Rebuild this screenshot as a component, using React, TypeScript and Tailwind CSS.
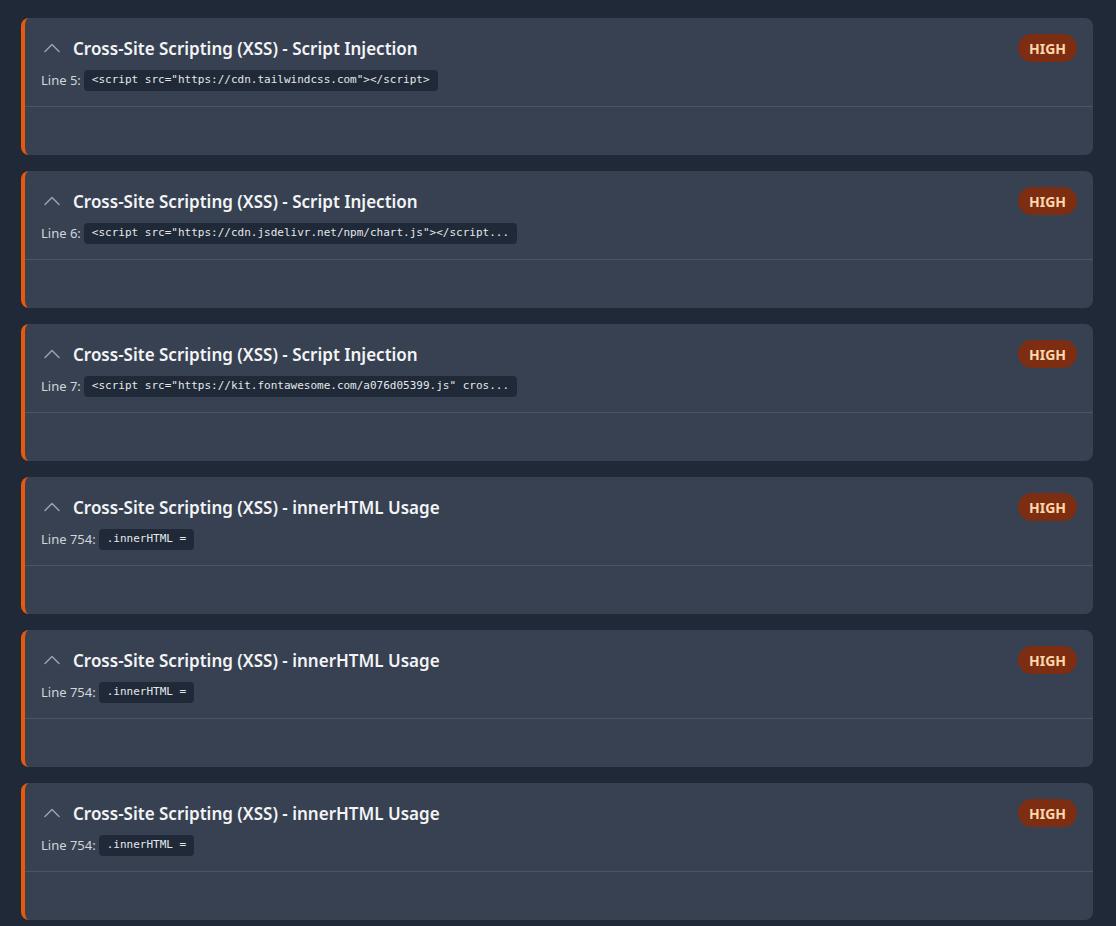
import React from "react";

type Finding = {
  title: string;
  line: number;
  code: string;
};

const FINDINGS: Finding[] = [
  { title: "Cross-Site Scripting (XSS) - Script Injection", line: 5, code: '<script src="https://cdn.tailwindcss.com"></script>' },
  { title: "Cross-Site Scripting (XSS) - Script Injection", line: 6, code: '<script src="https://cdn.jsdelivr.net/npm/chart.js"></script...' },
  { title: "Cross-Site Scripting (XSS) - Script Injection", line: 7, code: '<script src="https://kit.fontawesome.com/a076d05399.js" cros...' },
  { title: "Cross-Site Scripting (XSS) - innerHTML Usage", line: 754, code: ".innerHTML =" },
  { title: "Cross-Site Scripting (XSS) - innerHTML Usage", line: 754, code: ".innerHTML =" },
  { title: "Cross-Site Scripting (XSS) - innerHTML Usage", line: 754, code: ".innerHTML =" },
];

function Chevron() {
  return (
    <svg width="16" height="10" viewBox="0 0 16 10" fill="none" className="text-gray-400">
      <polyline points="1,8.5 8,1.5 15,8.5" stroke="currentColor" strokeWidth="1.5" strokeLinecap="round" strokeLinejoin="round" />
    </svg>
  );
}

function FindingCard({ finding }: { finding: Finding }) {
  return (
    <div className="overflow-hidden rounded-lg border-l-4 border-[#ea580c] bg-[#374151]">
      <div className="px-4 pt-4 pb-[15px]">
        <div className="flex h-7 items-center justify-between">
          <div className="flex items-center">
            <span className="ml-[3px] mr-[13px] flex items-center">
              <Chevron />
            </span>
            <h3 className="mt-px text-[17px] font-semibold text-gray-100">{finding.title}</h3>
          </div>
          <span className="flex h-7 items-center rounded-full bg-[#7c2d12] px-[11px] text-[14px] font-bold text-[#fed7aa]">
            HIGH
          </span>
        </div>
        <div className="mt-2 flex h-[21px] items-center gap-[3px]">
          <span className="text-[13px] text-gray-300">Line {finding.line}:</span>
          <code className="flex h-[21px] items-center rounded bg-[#1f2937] px-2 font-['DejaVu_Sans_Mono',monospace] text-[11px] text-gray-200">
            {finding.code}
          </code>
        </div>
      </div>
      <div className="h-[49px] border-t border-[#4b5563]" />
    </div>
  );
}

export default function App() {
  return (
    <main className="min-h-screen bg-[#1f2937] font-['Noto_Sans',sans-serif]">
      <div className="flex flex-col gap-4 pl-[21px] pr-[23px] pt-[18px] pb-4">
        {FINDINGS.map((f, i) => (
          <FindingCard key={i} finding={f} />
        ))}
      </div>
    </main>
  );
}
